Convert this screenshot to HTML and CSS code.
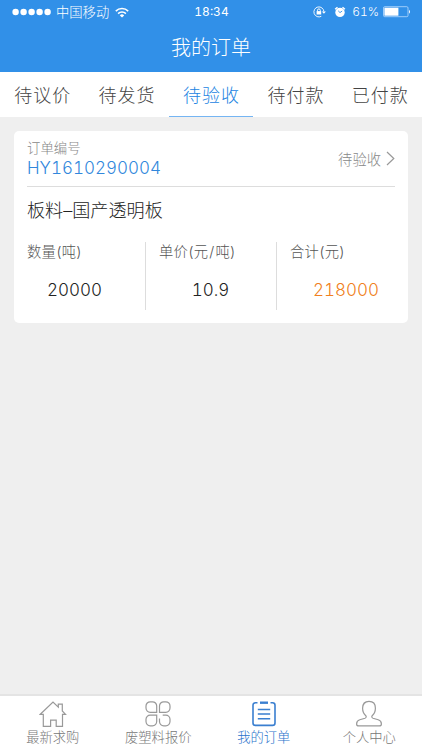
FILE: index.html
```html
<!DOCTYPE html>
<html lang="zh-CN">
<head>
<meta charset="utf-8">
<title>我的订单</title>
<link rel="stylesheet" href="styles.css">
</head>
<body>
<header class="header">
  <div class="status">
    <div class="carrier">
      <svg class="signal" width="40" height="10" viewBox="0 0 40 10" fill="#fff"><circle cx="3.6" cy="5" r="3.2"/><circle cx="11.6" cy="5" r="3.2"/><circle cx="19.6" cy="5" r="3.2"/><circle cx="27.6" cy="5" r="3.2"/><circle cx="35.6" cy="5" r="3.2"/></svg>
      <span class="carrier-name">中国移动</span>
      <svg class="wifi" width="14" height="11" viewBox="0 0 14 11" fill="none" stroke="#fff" stroke-width="1.6"><path d="M.8 4.1a8.8 8.8 0 0 1 12.4 0M3.1 6.6a5.5 5.5 0 0 1 7.8 0"/><path d="M7 10.6 4.8 8.4a3.1 3.1 0 0 1 4.4 0z" fill="#fff" stroke="none"/></svg>
    </div>
    <time class="clock">18:34</time>
    <div class="indicators">
      <svg class="lock" width="13" height="12" viewBox="0 0 13 12" fill="none" stroke="#fff"><path d="M8.3 10.3A5 5 0 1 1 10.9 5.6" stroke-width=".9"/><path d="M8.9 5.4h4l-2 2.4z" fill="#fff" stroke="none"/><path d="M4.5 5.5V4.3a1.4 1.4 0 0 1 2.8 0v1.2"/><path d="M3.6 5.1h4.6v3.4H3.6z" fill="#fff" stroke="none"/></svg>
      <svg class="alarm" width="12" height="12" viewBox="0 0 12 12"><circle cx="6" cy="6.4" r="4.7" fill="#fff"/><path d="M1.1 3.3 3.5 1.2M8.5 1.2l2.4 2.1" stroke="#fff" stroke-width="1.4"/><path d="M4.2 4.8 6 6.6l2.2-1.6" fill="none" stroke="#3190e8" stroke-width=".9"/></svg>
      <span class="percent">61%</span>
      <svg class="battery" width="28" height="12" viewBox="0 0 28 12"><rect x=".5" y=".7" width="24.5" height="10" rx="1.2" fill="none" stroke="#b9dcff" stroke-width=".8"/><path d="M1.4 1.7h14v8h-14z" fill="#fff"/><path d="M26 3.7q2 2 0 4z" fill="#fff"/></svg>
    </div>
  </div>
  <h1 class="title">我的订单</h1>
</header>
<nav class="tabs">
  <a class="tab">待议价</a>
  <a class="tab">待发货</a>
  <a class="tab tab-active">待验收</a>
  <a class="tab">待付款</a>
  <a class="tab">已付款</a>
</nav>
<main class="content">
  <article class="card">
    <div class="card-head">
      <div>
        <div class="order-label">订单编号</div>
        <div class="order-no">HY1610290004</div>
      </div>
      <div class="state">待验收<svg width="9" height="15" viewBox="0 0 9 15" fill="none" stroke="#999" stroke-width="1.2"><path d="m1 1 6.8 6.5L1 14"/></svg></div>
    </div>
    <h2 class="product">板料<span class="dash">–</span>国产透明板</h2>
    <div class="figures">
      <div class="figure"><div class="figure-label">数量(吨)</div><div class="figure-value quantity">20000</div></div>
      <div class="figure"><div class="figure-label">单价(元<span class="slash">/</span>吨)</div><div class="figure-value price">10.9</div></div>
      <div class="figure"><div class="figure-label">合计(元)</div><div class="figure-value total">218000</div></div>
    </div>
  </article>
</main>
<footer class="bottom">
  <a class="item"><svg width="28" height="28" viewBox="0 0 28 28"><path d="M1.3 14.3 14 2.1l5.3 5V4.2h4v6.8l3.2 3.3h-3v12h-6.3v-6.1h-5.6v6.1H4.3v-12z"/></svg><span>最新求购</span></a>
  <a class="item"><svg width="28" height="28" viewBox="0 0 28 28"><path d="M12.7 12.3H6.2a4.2 4.2 0 0 1-4.2-4.2V6a4.2 4.2 0 0 1 4.2-4.2h2.3A4.2 4.2 0 0 1 12.7 6zM15.5 12.3V6a4.2 4.2 0 0 1 4.2-4.2h2.1A4.2 4.2 0 0 1 26 6v2.1a4.2 4.2 0 0 1-4.2 4.2zM12.7 15.1v6.5a4.2 4.2 0 0 1-4.2 4.2H6.2A4.2 4.2 0 0 1 2 21.6v-2.3a4.2 4.2 0 0 1 4.2-4.2zM18.7 15.1h3.1a4.2 4.2 0 0 1 4.2 4.2v2.3a4.2 4.2 0 0 1-4.2 4.2h-2.1a4.2 4.2 0 0 1-4.2-4.2v-3"/></svg><span>废塑料报价</span></a>
  <a class="item item-active"><svg width="28" height="28" viewBox="0 0 28 28"><path d="M7.5 2.7h-2a2.5 2.5 0 0 0-2.5 2.5v17.7a2.5 2.5 0 0 0 2.5 2.5h17a2.5 2.5 0 0 0 2.5-2.5V5.2a2.5 2.5 0 0 0-2.5-2.5h-2M7.8 9.5h12.4M7.8 14h12.4M7.8 18.8h12.4"/><path d="M10 2.7h8" stroke-width="2.4"/></svg><span>我的订单</span></a>
  <a class="item"><svg width="28" height="28" viewBox="0 0 28 28"><path d="M10.8 15.7C8.5 13.6 7.6 11.3 7.6 8.2c0-4.2 2.4-6.8 6.4-6.8s6.4 2.6 6.4 6.8c0 3.1-.9 5.4-3.2 7.5-.8 1-.4 2.1.8 2.5l5.2 1.6c2.1.7 3.2 2.2 3.2 4.1 0 1.5-.6 2-2.2 2H3.8c-1.6 0-2.2-.5-2.2-2 0-1.9 1.1-3.4 3.2-4.1l5.2-1.6c1.2-.4 1.6-1.5.8-2.5z"/></svg><span>个人中心</span></a>
</footer>
</body>
</html>
```
FILE: styles.css
```css
* { box-sizing: border-box; }

body {
  display: flex;
  flex-direction: column;
  width: 422px;
  height: 750px;
  margin: 0;
  overflow: hidden;
  background: #efefef;
  font-family: Inter, "Noto Sans CJK SC", sans-serif;
  font-variant-numeric: tabular-nums;
  font-weight: 300;
}

.header {
  height: 72px;
  background: #3190e8;
  color: #fff;
}

.status {
  display: grid;
  grid-template-columns: 1fr auto 1fr;
  align-items: center;
  height: 24px;
  padding: 0 11px 0 12px;
  font-size: 12px;
  line-height: 24px;
}

.carrier, .indicators { display: flex; align-items: center; }
.carrier-name { margin: 0 6px 0 4px; font-size: 13.3px; line-height: 23px; }
.clock { font-weight: 400; }
.indicators { justify-content: flex-end; }
.alarm { margin: 0 6px 0 8px; }
.percent { margin-right: 4px; }

.title {
  margin: 0;
  font-size: 20px;
  font-weight: 300;
  line-height: 49px;
  text-align: center;
}

.tabs {
  display: flex;
  height: 45px;
  background: #fff;
}

.tab {
  flex: 1;
  height: 45px;
  padding-left: 1px;
  color: #444;
  font-size: 18px;
  letter-spacing: 1px;
  line-height: 47px;
  text-align: center;
}

.tab-active {
  border-bottom: 1px solid #75b5f3;
  color: #2384e2;
}

.content { flex: 1; padding: 14px 14px 0; }

.card {
  height: 192px;
  padding: 0 13px;
  border-radius: 5px;
  background: #fff;
}

.card-head {
  display: flex;
  justify-content: space-between;
  height: 56px;
  padding-top: 7px;
  border-bottom: 1px solid #ddd;
}

.order-label { color: #888; font-size: 13.4px; line-height: 20px; }

.order-no {
  color: #3187dc;
  font-size: 17px;
  line-height: 21px;
}

.state {
  display: flex;
  gap: 5px;
  align-items: center;
  height: 40px;
  color: #888;
  font-size: 14.3px;
}

.product {
  height: 46px;
  margin: 0;
  color: #222;
  font-size: 18.1px;
  font-weight: 300;
  line-height: 46px;
}

.figures {
  display: grid;
  grid-template-columns: 119px 131px 1fr;
  height: 68px;
  margin-top: 9px;
}

.figure { padding-left: 13px; }
.figure:first-child { padding-left: 0; }
.figure:not(:last-child) { border-right: 1px solid #ddd; }

.figure-label {
  height: 20px;
  color: #555;
  font-size: 14.3px;
  letter-spacing: 0.2px;
  line-height: 20px;
}

.slash { margin: 0 1px; }

.figure-value {
  margin-top: 17px;
  color: #222;
  font-size: 17px;
  line-height: 22px;
  text-align: center;
}

.quantity { padding-right: 23px; }
.price { padding-right: 14px; }
.total { padding-left: 7px; color: #f08020; }

.bottom {
  display: grid;
  grid-template-columns: repeat(4, 1fr);
  height: 56px;
  border-top: 2px solid #e4e4e4;
  background: #fff;
}

.item {
  display: flex;
  flex-direction: column;
  align-items: center;
  padding-top: 4px;
  color: #777;
  font-size: 13.3px;
  line-height: 19px;
}

.item svg {
  fill: none;
  stroke: #999;
  stroke-width: 1.2;
}

.item-active { color: #2a74cc; }
.item-active svg { stroke: #3a7fd0; stroke-width: 1.6; }
```
